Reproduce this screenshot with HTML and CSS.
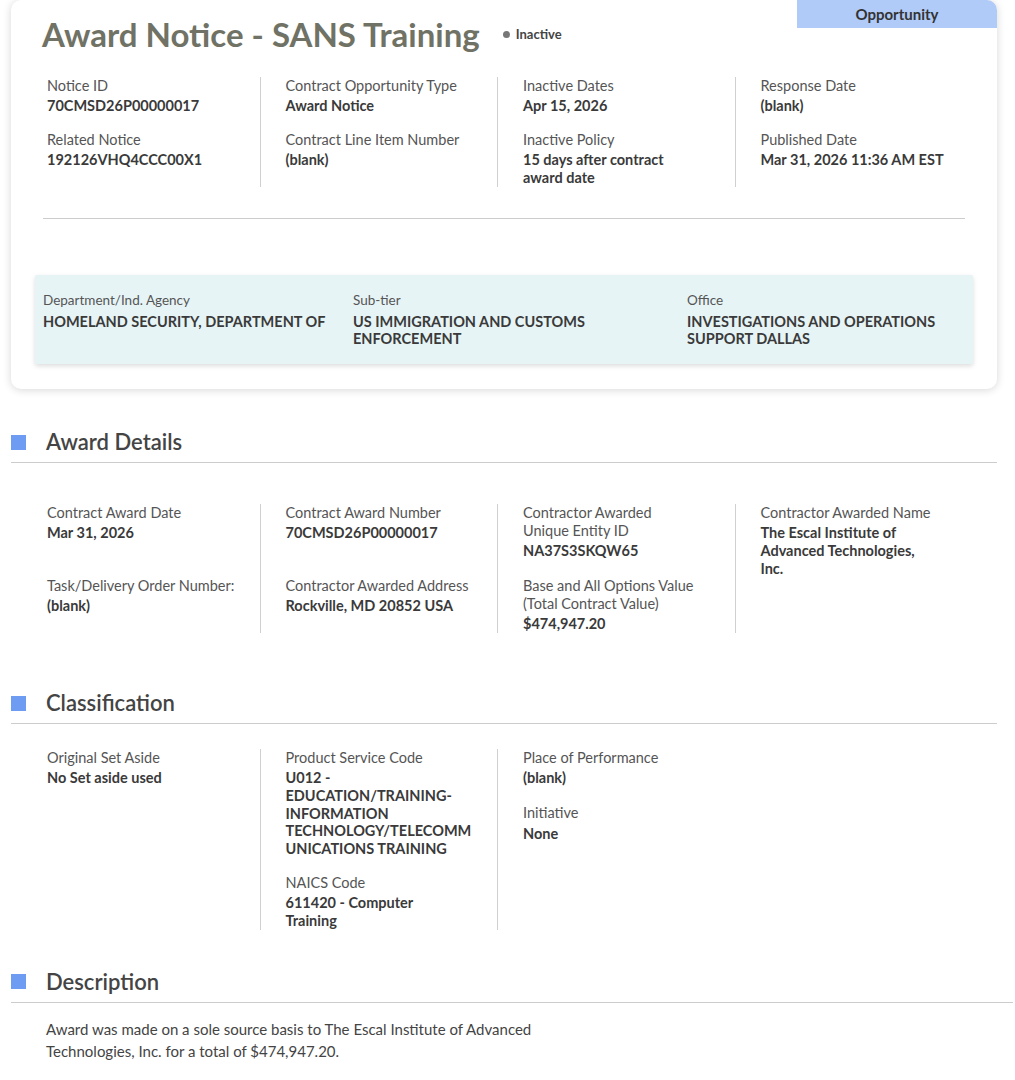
FILE: index.html
```html
<!DOCTYPE html>
<html lang="en">
<head>
    <meta charset="UTF-8">
    <meta name="viewport" content="width=device-width, initial-scale=1.0">
    <title>Award Notice - SANS Training</title>
    <link rel="stylesheet" href="styles.css">
</head>
<body>
    <div class="page">
        <section class="card">
            <div class="tab">Opportunity</div>
            <div class="title-row">
                <h1>Award Notice - SANS Training</h1>
                <span class="status"><span class="dot"></span>Inactive</span>
            </div>

            <div class="cols top-cols">
                <div class="col">
                    <div class="field">
                        <div class="label">Notice ID</div>
                        <div class="value">70CMSD26P00000017</div>
                    </div>
                    <div class="field">
                        <div class="label">Related Notice</div>
                        <div class="value">192126VHQ4CCC00X1</div>
                    </div>
                </div>
                <div class="col">
                    <div class="field">
                        <div class="label">Contract Opportunity Type</div>
                        <div class="value">Award Notice</div>
                    </div>
                    <div class="field">
                        <div class="label">Contract Line Item Number</div>
                        <div class="value">(blank)</div>
                    </div>
                </div>
                <div class="col">
                    <div class="field">
                        <div class="label">Inactive Dates</div>
                        <div class="value">Apr 15, 2026</div>
                    </div>
                    <div class="field">
                        <div class="label">Inactive Policy</div>
                        <div class="value narrow">15 days after contract award date</div>
                    </div>
                </div>
                <div class="col">
                    <div class="field">
                        <div class="label">Response Date</div>
                        <div class="value">(blank)</div>
                    </div>
                    <div class="field">
                        <div class="label">Published Date</div>
                        <div class="value">Mar 31, 2026 11:36 AM EST</div>
                    </div>
                </div>
            </div>

            <hr class="divider">

            <div class="agency">
                <div class="agency-item">
                    <div class="label">Department/Ind. Agency</div>
                    <div class="value">HOMELAND SECURITY, DEPARTMENT OF</div>
                </div>
                <div class="agency-item">
                    <div class="label">Sub-tier</div>
                    <div class="value">US IMMIGRATION AND CUSTOMS ENFORCEMENT</div>
                </div>
                <div class="agency-item">
                    <div class="label">Office</div>
                    <div class="value">INVESTIGATIONS AND OPERATIONS SUPPORT DALLAS</div>
                </div>
            </div>
        </section>

        <section class="section">
            <h2 class="section-title"><span class="marker"></span>Award Details</h2>
            <div class="award-grid">
                <div class="cell">
                    <div class="label">Contract Award Date</div>
                    <div class="value">Mar 31, 2026</div>
                </div>
                <div class="cell line">
                    <div class="label">Contract Award Number</div>
                    <div class="value">70CMSD26P00000017</div>
                </div>
                <div class="cell line">
                    <div class="label">Contractor Awarded<br>Unique Entity ID</div>
                    <div class="value">NA37S3SKQW65</div>
                </div>
                <div class="cell line tall">
                    <div class="label">Contractor Awarded Name</div>
                    <div class="value narrow">The Escal Institute of Advanced Technologies, Inc.</div>
                </div>
                <div class="cell last">
                    <div class="label">Task/Delivery Order Number:</div>
                    <div class="value">(blank)</div>
                </div>
                <div class="cell line last">
                    <div class="label">Contractor Awarded Address</div>
                    <div class="value">Rockville, MD 20852 USA</div>
                </div>
                <div class="cell line last">
                    <div class="label">Base and All Options Value<br>(Total Contract Value)</div>
                    <div class="value">$474,947.20</div>
                </div>
            </div>
        </section>

        <section class="section">
            <h2 class="section-title"><span class="marker"></span>Classification</h2>
            <div class="cols class-cols">
                <div class="col">
                    <div class="field">
                        <div class="label">Original Set Aside</div>
                        <div class="value">No Set aside used</div>
                    </div>
                </div>
                <div class="col">
                    <div class="field">
                        <div class="label">Product Service Code</div>
                        <div class="value code">U012 - EDUCATION/TRAINING-INFORMATION TECHNOLOGY/TELECOMMUNICATIONS TRAINING</div>
                    </div>
                    <div class="field">
                        <div class="label">NAICS Code</div>
                        <div class="value narrow">611420 - Computer Training</div>
                    </div>
                </div>
                <div class="col">
                    <div class="field">
                        <div class="label">Place of Performance</div>
                        <div class="value">(blank)</div>
                    </div>
                    <div class="field spaced">
                        <div class="label">Initiative</div>
                        <div class="value">None</div>
                    </div>
                </div>
            </div>
        </section>

        <section class="section desc">
            <h2 class="section-title"><span class="marker"></span>Description</h2>
            <p class="description">Award was made on a sole source basis to The Escal Institute of Advanced Technologies, Inc. for a total of $474,947.20.</p>
        </section>
    </div>
</body>
</html>
```

FILE: styles.css
```css
body {
    font-family: 'Lato', sans-serif;
    margin: 0;
    padding: 0;
    background: #ffffff;
    color: #333;
}
.page {
    margin-left: 11px;
    width: 986px;
}
.card {
    position: relative;
    background: #ffffff;
    border-radius: 10px;
    box-shadow: 0 1px 8px rgba(0, 0, 0, 0.16);
    padding: 14px 0 25px;
    margin-bottom: 38px;
}
.tab {
    position: absolute;
    top: 0;
    right: 0;
    width: 200px;
    height: 28px;
    line-height: 29px;
    text-align: center;
    background: #b1cbf8;
    border-top-right-radius: 10px;
    font-size: 15px;
    font-weight: bold;
    color: #333;
}
.title-row {
    display: flex;
    align-items: center;
    padding-left: 31px;
}
h1 {
    margin: 0;
    font-size: 33px;
    line-height: 40px;
    font-weight: bold;
    color: #6f7264;
}
.status {
    display: flex;
    align-items: center;
    margin-left: 23px;
    font-size: 13px;
    font-weight: bold;
    color: #444;
}
.dot {
    width: 7px;
    height: 7px;
    border-radius: 50%;
    background: #777;
    margin-right: 6px;
}
.cols {
    display: grid;
    grid-template-columns: repeat(4, 237.5px);
    margin-left: 11px;
}
.col {
    display: flex;
    flex-direction: column;
    gap: 16px;
    padding: 0 20px 0 25px;
}
.col + .col {
    border-left: 1px solid #d0d0d0;
}
.top-cols {
    margin-top: 23px;
}
.label {
    font-size: 14.5px;
    line-height: 18px;
    color: #555;
    margin-bottom: 2px;
}
.value {
    font-size: 14.5px;
    line-height: 18px;
    font-weight: bold;
    color: #3a3a3a;
}
.divider {
    border: none;
    border-top: 1px solid #ccc;
    margin: 31px 32px 0;
}
.agency {
    display: grid;
    grid-template-columns: 310px 334px 1fr;
    background: #e7f4f6;
    margin: 56px 24px 0;
    padding: 16px 8px 17px;
    box-shadow: 0 2px 5px rgba(0, 0, 0, 0.14);
    border-radius: 2px;
}
.agency-item {
    padding-right: 18px;
}
.agency .label {
    font-size: 13.5px;
    margin-bottom: 4px;
}
.agency .value {
    line-height: 17px;
}
.section + .section {
    margin-top: 55px;
}
.section + .desc {
    margin-top: 37px;
}
.section-title {
    display: flex;
    align-items: center;
    margin: 0;
    padding-bottom: 5px;
    border-bottom: 1px solid #ccc;
    font-size: 22px;
    line-height: 30px;
    font-weight: 600;
    color: #444;
}
.marker {
    width: 15px;
    height: 15px;
    background: #6d9cf2;
    margin-right: 20px;
}
.award-grid {
    display: grid;
    grid-template-columns: repeat(4, 237.5px);
    margin: 41px 0 0 11px;
}
.cell {
    padding: 0 20px 17px 25px;
}
.cell.line {
    border-left: 1px solid #d0d0d0;
}
.cell.tall {
    grid-row: span 2;
    padding-bottom: 0;
}
.cell.last {
    padding-bottom: 0;
}
.narrow {
    max-width: 175px;
}
.class-cols {
    margin-top: 25px;
}
.code {
    max-width: 188px;
    overflow-wrap: anywhere;
    line-height: 17.8px;
}
.spaced {
    margin-top: 1px;
}
.spaced .value {
    margin-top: 3px;
}
.desc {
    width: 1002px;
}
.description {
    margin: 15px 0 0 35px;
    max-width: 500px;
    font-size: 15px;
    line-height: 22px;
    color: #444;
}
```
